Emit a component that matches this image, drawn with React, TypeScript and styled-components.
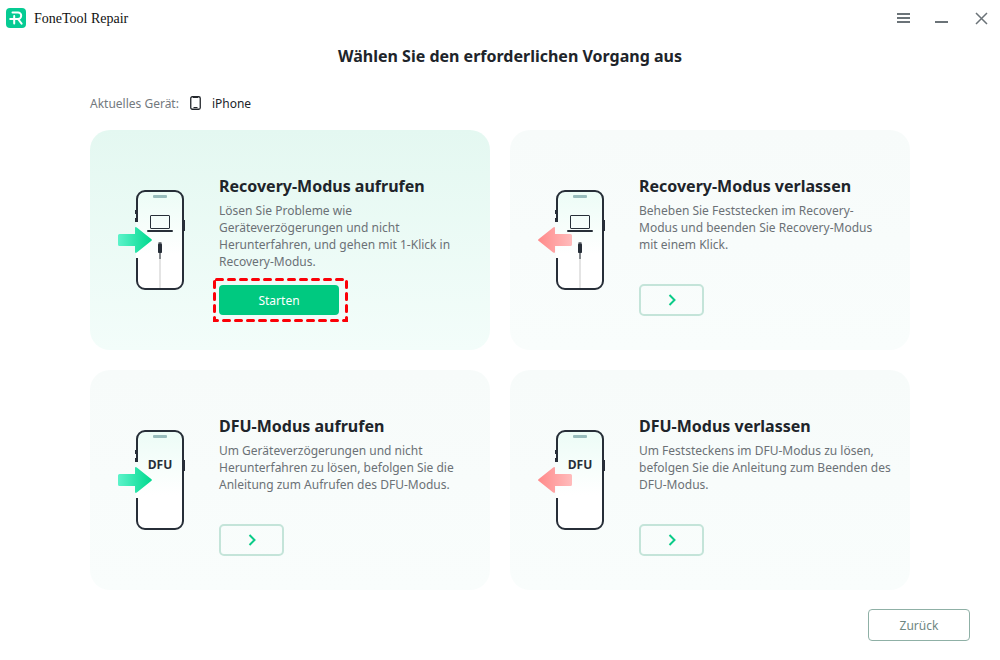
import React from "react";
import styled, { createGlobalStyle } from "styled-components";

const GlobalStyle = createGlobalStyle`
  * { box-sizing: border-box; }
  body {
    margin: 0;
    background: #ffffff;
    color: #20242a;
    font: 12px/17px "Noto Sans", "Open Sans", sans-serif;
  }
  h1, h2, p { margin: 0; }
  button { font: inherit; cursor: pointer; }
`;

const Window = styled.div`
  display: flex;
  flex-direction: column;
  min-height: 100vh;
`;

const TitleBar = styled.header`
  display: flex;
  align-items: center;
  height: 36px;
  padding: 0 9px 0 6px;
`;

const AppName = styled.span`
  flex: 1;
  margin-left: 8px;
  color: #101010;
  font: 14px/18px "Liberation Serif", serif;
  padding-top: 2px;
`;

const WindowControls = styled.div`
  display: flex;
  gap: 19px;
`;

const ControlButton = styled.button`
  display: flex;
  padding: 0;
  border: 0;
  background: none;
  color: #6b7378;
`;

const Main = styled.main`
  flex: 1;
  padding: 8px 90px 0;
`;

const PageTitle = styled.h1`
  padding-left: 20px;
  font-size: 16px;
  line-height: 24px;
  text-align: center;
`;

const DeviceRow = styled.div`
  display: flex;
  align-items: center;
  gap: 11px;
  height: 20px;
  margin: 25px 0 17px;
`;

const DeviceLabel = styled.span`
  color: #73797e;
`;

const CardGrid = styled.div`
  display: grid;
  grid-template-columns: 1fr 1fr;
  gap: 20px;
`;

const Card = styled.section<{ $active?: boolean }>`
  display: flex;
  gap: 33px;
  min-height: 220px;
  padding: 44px 0 34px 28px;
  border-radius: 20px;
  background: ${(p) =>
    p.$active
      ? "linear-gradient(#e4f8f1, #f3fdfa)"
      : "linear-gradient(#f7fbfa, #f9fdfc)"};
`;

const Picture = styled.svg`
  flex: none;
  margin-top: 16px;
`;

const CardBody = styled.div`
  display: flex;
  flex: 1;
  flex-direction: column;
  align-items: flex-start;
`;

const CardTitle = styled.h2`
  margin-bottom: 4px;
  font-size: 16px;
  line-height: 24px;
`;

const CardText = styled.p`
  color: #6b7176;
  white-space: pre-line;
`;

const Action = styled.div`
  position: relative;
  display: flex;
  align-items: center;
  height: 32px;
  margin-top: auto;
`;

const StartButton = styled.button`
  width: 120px;
  height: 30px;
  border: 0;
  border-radius: 4px;
  background: #00c980;
  color: #ffffff;
`;

const Highlight = styled.svg`
  position: absolute;
  top: -6px;
  left: -6px;
  pointer-events: none;
`;

const OpenButton = styled.button`
  display: grid;
  place-items: center;
  width: 65px;
  height: 32px;
  padding: 0;
  border: 2px solid #c4e4d9;
  border-radius: 5px;
  background: transparent;
`;

const Footer = styled.footer`
  display: flex;
  justify-content: flex-end;
  padding: 19px 30px;
`;

const BackButton = styled.button`
  width: 102px;
  height: 32px;
  border: 1px solid #8fb0a6;
  border-radius: 4px;
  background: #ffffff;
  color: #6f8782;
`;

const ink = "#272e38";

function Logo() {
  return (
    <svg width="20" height="20" viewBox="0 0 20 20" aria-hidden="true">
      <rect width="20" height="20" rx="4" fill="#06cb93" />
      <path
        d="M6.500 4.600H12a3.200 3.200 0 0 1 0 6.400H4.200M8.200 8v7.600M12 11l3.600 4.600"
        fill="none"
        stroke="#fff"
        strokeWidth="2"
        strokeLinecap="round"
        strokeLinejoin="round"
      />
    </svg>
  );
}

type Direction = "enter" | "exit";
type Mode = "recovery" | "dfu";

function PhonePicture({ id, mode, direction }: { id: string; mode: Mode; direction: Direction }) {
  const entering = direction === "enter";
  return (
    <Picture width="68" height="100" viewBox="0 0 68 100" aria-hidden="true">
      <defs>
        <linearGradient id={`${id}-screen`} x1="0" y1="0" x2="0" y2="1">
          <stop offset="0" stopColor="#ecfcf6" />
          <stop offset="0.65" stopColor="#ffffff" />
        </linearGradient>
        <linearGradient id={`${id}-arrow`}>
          <stop offset="0" stopColor={entering ? "#5cf3ca" : "#ff8a8a"} />
          <stop offset="1" stopColor={entering ? "#00d98e" : "#ffbcbc"} />
        </linearGradient>
      </defs>
      <rect x="18" y="0" width="48" height="100" rx="9" fill={`url(#${id}-screen)`} />
      <path
        d="M19 32V9a8 8 0 0 1 8-8h30a8 8 0 0 1 8 8v82a8 8 0 0 1-8 8H27a8 8 0 0 1-8-8V68"
        fill="none"
        stroke={ink}
        strokeWidth="2"
      />
      <path d="M17 20h1v4h-1zM17 28h1v4h-1zM66 30h1v11h-1z" fill={ink} />
      <rect x="35" y="5" width="14" height="3" rx="1" fill="#98bcbc" />
      {mode === "recovery" ? (
        <>
          <rect x="32.5" y="25.5" width="19" height="13" rx="0.5" fill="none" stroke={ink} />
          <rect x="29" y="40" width="26" height="2" rx="1" fill={ink} />
          <rect x="41" y="68" width="2" height="30" fill="#e4e4e4" />
          <rect x="41" y="62" width="2" height="7" fill="#868a8e" />
          <rect x="40.5" y="52" width="3" height="2" fill="#777c80" />
          <rect x="40" y="53.5" width="4" height="9.5" rx="0.8" fill={ink} />
        </>
      ) : (
        <text
          x="42"
          y="39"
          textAnchor="middle"
          fill={ink}
          fontFamily="Open Sans, sans-serif"
          fontSize="12"
          fontWeight="700"
        >
          DFU
        </text>
      )}
      <path
        d={
          entering
            ? "M1.5 44H17V38.4Q17 36.2 18.8 37.5L33.5 49.2Q34.4 50 33.5 50.8L18.8 62.5Q17 63.8 17 61.6V56H1.5Q0 56 0 54.5V45.500Q0 44 1.5 44Z"
            : "M32.500 44H17V38.4Q17 36.2 15.2 37.5L.5 49.2Q-.4 50 .5 50.8L15.2 62.5Q17 63.8 17 61.6V56H32.500Q34 56 34 54.5V45.500Q34 44 32.500 44Z"
        }
        fill={`url(#${id}-arrow)`}
      />
    </Picture>
  );
}

interface Operation {
  id: string;
  title: string;
  text: string;
  mode: Mode;
  direction: Direction;
  active?: boolean;
}

const operations: Operation[] = [
  {
    id: "recovery-enter",
    title: "Recovery-Modus aufrufen",
    text: "Lösen Sie Probleme wie\nGeräteverzögerungen und nicht\nHerunterfahren, und gehen mit 1-Klick in\nRecovery-Modus.",
    mode: "recovery",
    direction: "enter",
    active: true,
  },
  {
    id: "recovery-exit",
    title: "Recovery-Modus verlassen",
    text: "Beheben Sie Feststecken im Recovery-\nModus und beenden Sie Recovery-Modus\nmit einem Klick.",
    mode: "recovery",
    direction: "exit",
  },
  {
    id: "dfu-enter",
    title: "DFU-Modus aufrufen",
    text: "Um Geräteverzögerungen und nicht\nHerunterfahren zu lösen, befolgen Sie die\nAnleitung zum Aufrufen des DFU-Modus.",
    mode: "dfu",
    direction: "enter",
  },
  {
    id: "dfu-exit",
    title: "DFU-Modus verlassen",
    text: "Um Feststeckens im DFU-Modus zu lösen,\nbefolgen Sie die Anleitung zum Beenden des\nDFU-Modus.",
    mode: "dfu",
    direction: "exit",
  },
];

function OperationCard({ id, title, text, mode, direction, active }: Operation) {
  return (
    <Card $active={active} aria-labelledby={`${id}-title`}>
      <PhonePicture id={id} mode={mode} direction={direction} />
      <CardBody>
        <CardTitle id={`${id}-title`}>{title}</CardTitle>
        <CardText>{text}</CardText>
        <Action>
          {active ? (
            <>
              <StartButton type="button">Starten</StartButton>
              <Highlight width="135" height="44" viewBox="0 0 135 44" aria-hidden="true">
                <rect
                  x="1.5"
                  y="1.5"
                  width="132"
                  height="41"
                  fill="none"
                  stroke="#fb0007"
                  strokeWidth="3"
                  strokeDasharray="6 6"
                  strokeDashoffset="-2"
                  strokeLinecap="round"
                />
              </Highlight>
            </>
          ) : (
            <OpenButton type="button" aria-labelledby={`${id}-title`}>
              <svg width="11" height="14" viewBox="0 0 11 14" aria-hidden="true">
                <path d="M3.500 2 8.500 7l-5 5" fill="none" stroke="#0acb88" strokeWidth="2" />
              </svg>
            </OpenButton>
          )}
        </Action>
      </CardBody>
    </Card>
  );
}

export default function App() {
  return (
    <Window>
      <GlobalStyle />
      <TitleBar>
        <Logo />
        <AppName>FoneTool Repair</AppName>
        <WindowControls>
          <ControlButton type="button" aria-label="Menü">
            <svg width="20" height="20" viewBox="0 0 20 20">
              <path d="M4 6h13M4 10h13M4 14h13" stroke="currentColor" strokeWidth="2" />
            </svg>
          </ControlButton>
          <ControlButton type="button" aria-label="Minimieren">
            <svg width="20" height="20" viewBox="0 0 20 20">
              <path d="M3 14h13" stroke="currentColor" strokeWidth="2" />
            </svg>
          </ControlButton>
          <ControlButton type="button" aria-label="Schließen">
            <svg width="20" height="20" viewBox="0 0 20 20">
              <path d="M5 5l11 11M16 5L5 16" stroke="currentColor" strokeWidth="1.5" />
            </svg>
          </ControlButton>
        </WindowControls>
      </TitleBar>
      <Main>
        <PageTitle>Wählen Sie den erforderlichen Vorgang aus</PageTitle>
        <DeviceRow>
          <DeviceLabel>Aktuelles Gerät:</DeviceLabel>
          <svg width="11" height="14" viewBox="0 0 11 14" aria-hidden="true">
            <rect x="0.75" y="0.75" width="9.5" height="12.5" rx="1.5" fill="none" stroke="#22262b" strokeWidth="1.3" />
            <path d="M3 1.500h5M3.500 11.500h4" stroke="#22262b" strokeWidth="1.2" />
          </svg>
          <span>iPhone</span>
        </DeviceRow>
        <CardGrid>
          {operations.map((operation) => (
            <OperationCard key={operation.id} {...operation} />
          ))}
        </CardGrid>
      </Main>
      <Footer>
        <BackButton type="button">Zurück</BackButton>
      </Footer>
    </Window>
  );
}
